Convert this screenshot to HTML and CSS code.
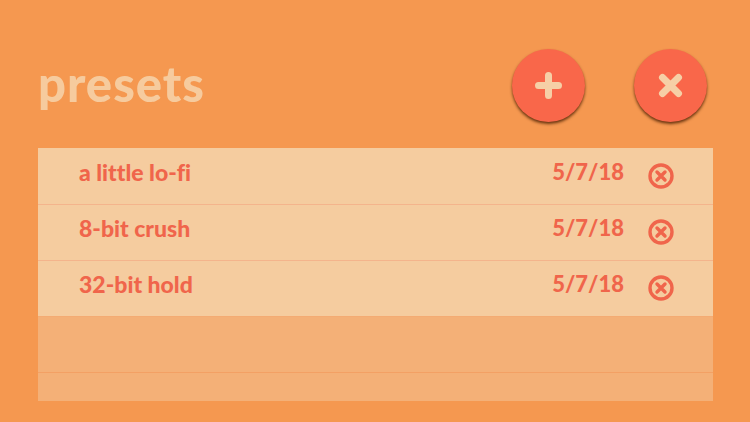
FILE: index.html
```html
<!DOCTYPE html>
<html lang="en">
<head>
    <meta charset="UTF-8">
    <title>presets</title>
    <link rel="stylesheet" href="styles.css">
</head>
<body>
    <header class="top">
        <h1 class="title">presets</h1>
        <div class="actions">
            <button class="round">
                <svg width="28" height="28" viewBox="0 0 28 28"><path d="M13.500 3.500V23.500M3.500 13.500H23.500" class="mark"/></svg>
            </button>
            <button class="round">
                <svg width="28" height="28" viewBox="0 0 28 28"><path d="M5.500 5.500L21.500 21.500M21.500 5.500L5.500 21.500" class="mark"/></svg>
            </button>
        </div>
    </header>
    <main class="list">
        <div class="row">
            <span class="name">a little lo-fi</span>
            <span class="date">5/7/18</span>
            <svg class="del" width="26" height="26" viewBox="0 0 26 26"><circle cx="13" cy="13" r="11"/><path d="M9 9L17 17M17 9L9 17"/></svg>
        </div>
        <div class="row">
            <span class="name">8-bit crush</span>
            <span class="date">5/7/18</span>
            <svg class="del" width="26" height="26" viewBox="0 0 26 26"><circle cx="13" cy="13" r="11"/><path d="M9 9L17 17M17 9L9 17"/></svg>
        </div>
        <div class="row">
            <span class="name">32-bit hold</span>
            <span class="date">5/7/18</span>
            <svg class="del" width="26" height="26" viewBox="0 0 26 26"><circle cx="13" cy="13" r="11"/><path d="M9 9L17 17M17 9L9 17"/></svg>
        </div>
        <div class="row empty"></div>
        <div class="row empty last"></div>
    </main>
</body>
</html>
```
FILE: styles.css
```css
*{
    margin: 0;
    padding: 0;
    box-sizing: border-box;
}

body{
    width: 750px;
    height: 422px;
    overflow: hidden;
    background-color: #f59850;
    font-family: "Lato", "Liberation Sans", sans-serif;
    font-variant-ligatures: none;
    padding: 49px 37px 21px 38px;
}

.top{
    height: 99px;
    display: flex;
    justify-content: space-between;
    align-items: flex-start;
}

.title{
    font-size: 49px;
    font-weight: 900;
    line-height: 69px;
    letter-spacing: 1px;
    color: #f6cb9e;
}

.actions{
    display: flex;
    gap: 49px;
    padding-right: 6px;
}

.round{
    width: 73px;
    height: 73px;
    border: none;
    border-radius: 50%;
    background-color: #f9674a;
    box-shadow: 0 2px 3px rgba(80, 35, 5, 0.85);
    display: flex;
    align-items: center;
    justify-content: center;
}

.mark{
    fill: none;
    stroke: #f6cfa6;
    stroke-width: 7;
    stroke-linecap: round;
}

.list{
    display: flex;
    flex-direction: column;
}

.row{
    height: 56px;
    background-color: #f5cc9f;
    border-top: 1px solid #f4b48c;
    display: flex;
    align-items: center;
    color: #f0654b;
    font-size: 23px;
    font-weight: 900;
    padding: 0 39px 0 41px;
}

.row:first-child{
    border-top-color: #f5cc9f;
}

.empty{
    background-color: #f4b077;
    border-top-color: #f3a064;
}

.row.empty:nth-child(4){
    border-top-color: #f4ab73;
}

.last{
    height: 29px;
}

.name{
    flex: 1;
    margin-top: -10px;
}

.date{
    font-size: 22px;
    margin-top: -11px;
    margin-right: 24px;
}

.del{
    margin-top: -1px;
    fill: none;
    stroke: #f0654b;
    stroke-width: 3.4;
    stroke-linecap: round;
}
```
